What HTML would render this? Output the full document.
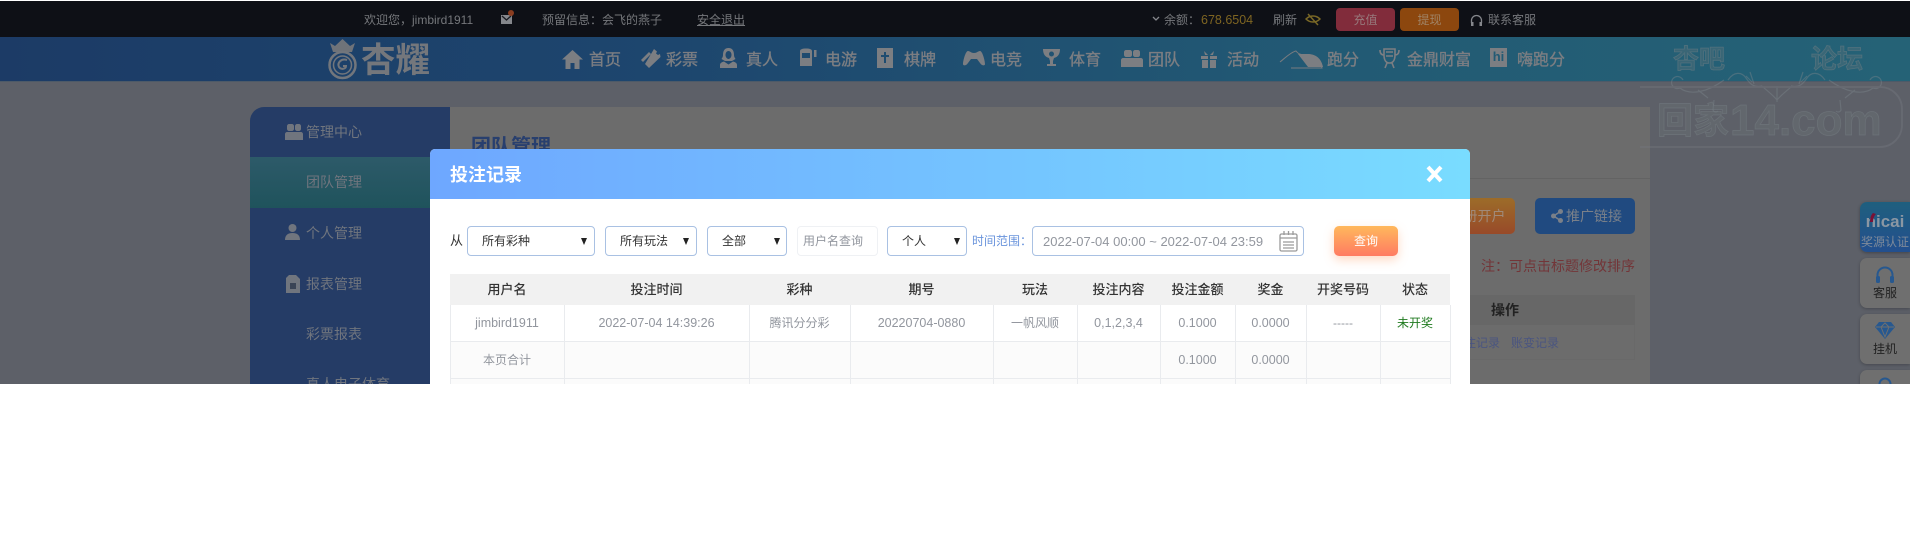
<!DOCTYPE html>
<html lang="zh"><head><meta charset="utf-8"><title>投注记录</title>
<style>
html,body{margin:0;padding:0;background:#fff}
#p{position:relative;width:1910px;height:548px;overflow:hidden;background:#fff;font-family:"Liberation Sans","Noto Sans CJK SC",sans-serif;font-size:12px}
#v{position:absolute;left:0;top:0;width:1910px;height:384px;overflow:hidden;background:#5d6068}
.a{position:absolute;white-space:nowrap}
.c{text-align:center}
.nt{color:#7c7e82;font-size:16px;font-weight:400;-webkit-text-stroke:.35px #7c7e82;top:50px;line-height:22px}
.ni{position:absolute;fill:#7c7e82}
.tb{color:#75777b;font-size:12px;line-height:18px;top:11px}
.side{color:#70757e;font-size:14px;line-height:20px}
.sel{position:absolute;top:226px;height:28px;border:1px solid #a9c1e3;border-radius:4px;background:#fff;color:#333;font-size:12px;line-height:29px}
.sel i{position:absolute;top:11px;width:0;height:0;border-left:3.5px solid transparent;border-right:3.5px solid transparent;border-top:7px solid #222}
.sel span{position:absolute;top:0}
.th{position:absolute;top:274px;height:31px;line-height:31px;text-align:center;font-size:13px;color:#333;font-weight:500}
.td{position:absolute;text-align:center;font-size:12px;color:#92969e;line-height:36px}
.vl{position:absolute;top:305px;height:79px;width:1px;background:#e9ebee}
.hl{position:absolute;left:450px;width:1000px;height:1px;background:#e9ebee}
.rb{position:absolute;left:1860px;width:50px;height:50px;border-radius:7px 0 0 7px;background:#6f6f6f;box-shadow:0 1px 3px rgba(0,0,0,.25);color:#222;text-align:center;font-size:12px}
.wm{color:rgba(110,118,124,.3);-webkit-text-stroke:.8px rgba(122,130,136,.45);font-weight:700}
</style></head><body><div id="p"><div id="v">

<!-- top bar -->
<div class="a" style="left:0;top:0;width:1910px;height:1px;background:#fff"></div>
<div class="a" style="left:0;top:1px;width:1910px;height:36px;background:#0e1016"></div>
<div class="a tb" style="left:364px">欢迎您，jimbird1911</div>
<svg class="a" style="left:500px;top:9px" width="15" height="16" viewBox="0 0 15 16"><rect x="1" y="6" width="11" height="9" fill="#85878c"/><path d="M2 7l4.500 4L11 7" stroke="#1a1c22" stroke-width="1.300" fill="none"/><circle cx="11" cy="4" r="3" fill="#8a3d20"/></svg>
<div class="a tb" style="left:542px">预留信息：会飞的燕子</div>
<div class="a tb" style="left:697px;text-decoration:underline">安全退出</div>
<svg class="a" style="left:1152px;top:16px" width="8" height="6" viewBox="0 0 8 6"><path d="M1 1l3 3 3-3" stroke="#85878c" stroke-width="1.300" fill="none"/></svg>
<div class="a tb" style="left:1164px">余额：</div>
<div class="a tb" style="left:1201px;color:#7e6522;font-size:12.500px">678.6504</div>
<div class="a tb" style="left:1273px">刷新</div>
<svg class="a" style="left:1305px;top:13px" width="16" height="14" viewBox="0 0 16 14"><path d="M1 6c4-4 10-4 14 0c-4 4-10 4-14 0zM3 1l10 11" stroke="#7a6826" stroke-width="1.500" fill="none"/></svg>
<div class="a c" style="left:1336px;top:8px;width:59px;height:23px;line-height:24px;border-radius:4px;background:#812c3b;color:#97797c">充值</div>
<div class="a c" style="left:1400px;top:8px;width:59px;height:23px;line-height:24px;border-radius:4px;background:#8c470e;color:#a08365">提现</div>
<svg class="a" style="left:1470px;top:14px" width="13" height="13" viewBox="0 0 13 13"><path d="M1.500 9V6.500a5 5 0 0 1 10 0V9" stroke="#85878c" stroke-width="1.300" fill="none"/><rect x="1" y="8" width="2.500" height="4" fill="#85878c"/><rect x="9.500" y="8" width="2.500" height="4" fill="#85878c"/></svg>
<div class="a tb" style="left:1488px">联系客服</div>

<!-- nav -->
<div class="a" style="left:0;top:37px;width:1910px;height:45px;background:linear-gradient(90deg,#1c3b66 0%,#1d466e 35%,#225a74 70%,#256276 100%)"></div>
<div class="a" style="left:0;top:81px;width:1910px;height:1px;background:#4d5a68"></div>
<!-- logo -->
<svg class="a" style="left:326px;top:39px" width="33" height="41" viewBox="0 0 33 41"><path d="M7 13L4 4l5 3 7.500-7L24 7l5-3-3 9z" fill="#6f7379"/><circle cx="16.500" cy="26" r="13" fill="none" stroke="#72767c" stroke-width="2.500"/><circle cx="16.500" cy="26" r="9" fill="none" stroke="#72767c" stroke-width="1.500"/><path d="M21 21c-6-2-10 3-8 7 2 3 7 2 7-1h-3" fill="none" stroke="#72767c" stroke-width="2"/></svg>
<div class="a" style="left:361px;top:41px;font-size:34.500px;line-height:40px;font-weight:700;color:#74777c">杏耀</div>
<svg class="ni" style="left:562px;top:49px" width="21" height="20" viewBox="0 0 21 20"><path d="M10.500 1L0 10.500h3.500V20h5v-6h4v6h5v-9.500H21z"/></svg>
<div class="a nt" style="left:589px">首页</div>
<svg class="ni" style="left:640px;top:48px" width="21" height="21" viewBox="0 0 21 21"><path d="M1 12L9 4l2 2-8 8zM5 16L14 1l3 2.500-1 2 2 1.500 2-1 .500 3L9 20z"/></svg>
<div class="a nt" style="left:666px">彩票</div>
<svg class="ni" style="left:719px;top:47px" width="19" height="22" viewBox="0 0 19 22"><path d="M9.500 1C5.500 1 4 4 4 8c0 2-1 3-1.500 4L6 14h7l3.500-2C16 11 15 10 15 8c0-4-1.500-7-5.500-7zm0 3c2 0 3 2 3 4s-1.500 4-3 4-3-2-3-4 1-4 3-4z" fill-rule="evenodd"/><path d="M1 21v-3c0-2 2-3 4-3.500l4.500 3 4.500-3c2 .5 4 1.500 4 3.500v3z"/></svg>
<div class="a nt" style="left:746px">真人</div>
<svg class="ni" style="left:798px;top:48px" width="20" height="20" viewBox="0 0 20 20"><path d="M2 3c0-1.500 2-2.500 6-2.500S14 1.500 14 3v15H2zM4 5v5h8V5z" fill-rule="evenodd"/><rect x="16" y="2" width="2.500" height="7"/></svg>
<div class="a nt" style="left:825px">电游</div>
<svg class="ni" style="left:877px;top:48px" width="16" height="20" viewBox="0 0 16 20"><path d="M0 0h16v20H0zM7 4v3H4v2h3v6h2V9h3V7H9V4z" fill-rule="evenodd"/></svg>
<div class="a nt" style="left:904px">棋牌</div>
<svg class="ni" style="left:963px;top:51px" width="22" height="15" viewBox="0 0 22 15"><path d="M5 0c2 0 3 2 6 2s4-2 6-2c2.500 0 5 10 5 13 0 2-3 2-5-1l-3-4H8l-3 4c-2 3-5 3-5 1C0 10 2.500 0 5 0z"/></svg>
<div class="a nt" style="left:990px">电竞</div>
<svg class="ni" style="left:1042px;top:48px" width="19" height="20" viewBox="0 0 19 20"><path d="M1 1h17c0 5-2 8-6 9l-1 3v3h3v2H5v-2h3v-3L7 10C3 9 1 6 1 1zm8.500 2.500a2.500 2.500 0 1 0 0 5 2.500 2.500 0 0 0 0-5z" fill-rule="evenodd"/></svg>
<div class="a nt" style="left:1069px">体育</div>
<svg class="ni" style="left:1121px;top:49px" width="22" height="19" viewBox="0 0 22 19"><path d="M5 1h4c1 0 2 1 2 2v3c0 1-1 2-2 2H5C4 8 3 7 3 6V3c0-1 1-2 2-2zM14 1h3c1 0 2 1 2 2v3c0 1-1 2-2 2h-3c-1 0-2-1-2-2V3c0-1 1-2 2-2zM0 11c0-1 1-2 2-2h18c1 0 2 1 2 2v7H0z"/></svg>
<div class="a nt" style="left:1148px">团队</div>
<svg class="ni" style="left:1200px;top:50px" width="18" height="18" viewBox="0 0 18 18"><path d="M1 6h7v3H1zM10 6h7v3h-7zM2 10h6v8H2zM10 10h6v8h-6zM4 1l4 4H5zM14 1l-4 4h3z"/></svg>
<div class="a nt" style="left:1227px">活动</div>
<svg class="a" style="left:1279px;top:50px" width="44" height="19" viewBox="0 0 44 19"><path d="M1 12C6 8 12 2 17 1c2 3 5 4 9 4 6 0 14 2 17 13H12" fill="none" stroke="#787b80" stroke-width="1"/><path d="M19 4h10c6 0 13 3 15 13H29z" fill="#7c7e82"/></svg>
<div class="a nt" style="left:1327px">跑分</div>
<svg class="a" style="left:1379px;top:48px" width="21" height="21" viewBox="0 0 21 21"><path d="M1 2c0 4 2 5 4 5V1h11v6c2 0 4-1 4-5M5 7c0 5 2 8 5.500 8S16 12 16 7M8 15l-2 5M13 15l2 5M7 4h7M7 8h7" fill="none" stroke="#7c7e82" stroke-width="1.600"/></svg>
<div class="a nt" style="left:1407px">金鼎财富</div>
<div class="a c" style="left:1490px;top:48px;width:17px;height:19px;background:#7c7e82;color:#225a74;font-size:13px;line-height:18px;font-weight:700">hi</div>
<div class="a nt" style="left:1517px">嗨跑分</div>

<!-- main panel -->
<div class="a" style="left:450px;top:107px;width:1200px;height:277px;background:#6c6c6c"></div>
<div class="a" style="left:450px;top:178px;width:1200px;height:1px;background:#636363"></div>
<div class="a" style="left:471px;top:134px;font-size:20px;line-height:26px;font-weight:700;color:#283f6e">团队管理</div>
<div class="a c" style="left:1440px;top:198px;width:75px;height:36px;border-radius:5px;background:linear-gradient(#9c6c29,#984a29);color:#a08a7a;font-size:14px;line-height:36px">注册开户</div>
<div class="a" style="left:1535px;top:198px;width:100px;height:36px;border-radius:5px;background:#204a80"></div>
<svg class="a" style="left:1551px;top:209px" width="12" height="14" viewBox="0 0 12 14"><circle cx="2.500" cy="7" r="2.500" fill="#7a8089"/><circle cx="9.500" cy="2.500" r="2.500" fill="#7a8089"/><circle cx="9.500" cy="11.500" r="2.500" fill="#7a8089"/><path d="M2.500 7l7-4.500M2.500 7l7 4.500" stroke="#7a8089" stroke-width="1.500"/></svg>
<div class="a" style="left:1566px;top:206px;font-size:14px;line-height:20px;color:#7a8089">推广链接</div>
<div class="a" style="left:1481px;top:256px;font-size:14px;line-height:20px;color:#733538">注：可点击标题修改排序</div>
<div class="a" style="left:1440px;top:295px;width:195px;height:30px;background:#676767"></div>
<div class="a" style="left:1440px;top:325px;width:195px;height:35px;border:1px solid #696969;border-top:0;box-sizing:border-box"></div>
<div class="a" style="left:1491px;top:300px;font-size:14px;line-height:20px;font-weight:700;color:#222">操作</div>
<div class="a" style="left:1452px;top:334px;font-size:12px;line-height:18px;color:#4a5580">投注记录</div>
<div class="a" style="left:1511px;top:334px;font-size:12px;line-height:18px;color:#4a5580">账变记录</div>

<!-- sidebar -->
<div class="a" style="left:250px;top:107px;width:200px;height:277px;border-radius:14px 0 0 0;background:#253c66"></div>
<div class="a" style="left:250px;top:157px;width:200px;height:51px;background:linear-gradient(#2d5a69,#1f535c)"></div>
<svg class="a" style="left:285px;top:124px" width="18" height="16" viewBox="0 0 18 16"><path d="M4 0h3c1 0 2 1 2 2v3c0 1-1 2-2 2H4C3 7 2 6 2 5V2c0-1 1-2 2-2zM12 0h2c1 0 2 1 2 2v3c0 1-1 2-2 2h-2c-1 0-2-1-2-2V2c0-1 1-2 2-2zM0 10c0-1 1-2 2-2h14c1 0 2 1 2 2v6H0z" fill="#70757e"/></svg>
<div class="a side" style="left:306px;top:122px">管理中心</div>
<div class="a side" style="left:306px;top:172px">团队管理</div>
<svg class="a" style="left:285px;top:224px" width="15" height="16" viewBox="0 0 15 16"><circle cx="7.500" cy="4" r="4" fill="#70757e"/><path d="M0 16c0-5 3-7 7.500-7S15 11 15 16z" fill="#70757e"/></svg>
<div class="a side" style="left:306px;top:223px">个人管理</div>
<svg class="a" style="left:286px;top:275px" width="14" height="18" viewBox="0 0 14 18"><path d="M3 0h7l4 4v14H0V3z" fill="#70757e"/><rect x="4" y="8" width="6" height="6" fill="#3a4456"/></svg>
<div class="a side" style="left:306px;top:274px">报表管理</div>
<div class="a side" style="left:306px;top:324px">彩票报表</div>
<div class="a side" style="left:306px;top:374px">真人电子体育</div>

<!-- watermark -->
<div class="a wm" style="left:1673px;top:44px;font-size:26px;line-height:30px">杏吧</div>
<div class="a wm" style="left:1811px;top:44px;font-size:26px;line-height:30px">论坛</div>
<svg class="a" style="left:1640px;top:50px" width="270" height="105" viewBox="0 0 270 105" fill="none" stroke="#7c868c" stroke-width="1.200" opacity=".42"><path d="M88 30c6-9 14-8 18-2s8 10 16 8M185 30c-6-9-14-8-18-2s-8 10-16 8M122 36c4 4 10 8 15 14 5-6 11-10 15-14M110 22l4 12M106 26l6 6M163 22l-4 12M167 26l-6 6M137 36v16M40 38c10 8 28 4 44-8M233 38c-10 8-28 4-44-8M40 38a6 6 0 1 1 3-8M233 38a6 6 0 1 0-3-8M74 50l-1 10a3 3 0 0 0 5 1M200 50l1 10a3 3 0 0 1-5 1M58 40l10 8M215 40l-10 8"/><rect x="-26" y="37" width="288" height="60" rx="22" stroke="#767a80" stroke-width="1.800"/></svg>
<div class="a wm" style="left:1657px;top:98px;font-size:36px;line-height:46px">回家</div>
<div class="a wm" style="left:1730px;top:96px;font-size:44px;line-height:50px;font-family:'Liberation Sans',sans-serif">14.com</div>

<!-- right floating -->
<div class="a" style="left:1860px;top:202px;width:50px;height:50px;border-radius:7px 0 0 7px;background:linear-gradient(#1f5f7e,#234f8e);box-shadow:0 1px 3px rgba(0,0,0,.3)"></div>
<div class="a c" style="left:1860px;top:210px;width:50px;font-size:17px;line-height:24px;font-weight:700;color:#8b97a3">nicai</div>
<svg class="a" style="left:1868px;top:210px" width="12" height="14" viewBox="0 0 12 14"><path d="M2 12c0-4 1-7 3-9l3 1c-2 2-3 5-3 8z" fill="#7a1236"/></svg>
<div class="a c" style="left:1860px;top:234px;width:50px;font-size:12px;line-height:16px;color:#7f8a9a">奖源认证</div>
<div class="rb" style="top:258px"><svg style="display:block;margin:8px auto 0" width="20" height="18" viewBox="0 0 20 18"><path d="M2.500 13V9a7.500 7.500 0 0 1 15 0v4" stroke="#27588f" stroke-width="2" fill="none"/><rect x="1" y="10" width="4" height="7" rx="1.500" fill="#27588f"/><rect x="15" y="10" width="4" height="7" rx="1.500" fill="#27588f"/></svg><div style="line-height:18px">客服</div></div>
<div class="rb" style="top:314px"><svg style="display:block;margin:7px auto 0" width="22" height="19" viewBox="0 0 22 19"><path d="M5 1h12l4 5-10 12L1 6z" fill="#27588f"/><path d="M2 6h18M7 6l4 10 4-10M7 6l4-4 4 4" stroke="#6f6f6f" fill="none"/></svg><div style="line-height:18px">挂机</div></div>
<div class="rb" style="top:370px"><svg style="display:block;margin:7px auto 0" width="14" height="14" viewBox="0 0 14 14"><circle cx="7" cy="7" r="5.500" stroke="#27588f" stroke-width="2" fill="none"/></svg></div>

<!-- modal -->
<div class="a" style="left:430px;top:149px;width:1040px;height:260px;background:#fff;border-radius:5px 5px 0 0"></div>
<div class="a" style="left:430px;top:149px;width:1040px;height:50px;border-radius:5px 5px 0 0;background:linear-gradient(90deg,#6ea7ff 0%,#79dcff 100%)"></div>
<div class="a" style="left:450px;top:162px;font-size:18px;line-height:26px;font-weight:700;color:#fff">投注记录</div>
<svg class="a" style="left:1426px;top:165px" width="17" height="18" viewBox="0 0 17 18"><path d="M2 2l13 14M15 2L2 16" stroke="#fff" stroke-width="4"/></svg>

<div class="a" style="left:450px;top:232px;font-size:13px;line-height:18px;color:#333">从</div>
<div class="sel" style="left:467px;width:126px"><span style="left:14px">所有彩种</span><i style="left:113px"></i></div>
<div class="sel" style="left:605px;width:90px"><span style="left:14px">所有玩法</span><i style="left:77px"></i></div>
<div class="sel" style="left:707px;width:78px"><span style="left:14px">全部</span><i style="left:66px"></i></div>
<div class="sel" style="left:797px;width:79px;border-color:#eff1f4;color:#92969e"><span style="left:5px">用户名查询</span></div>
<div class="sel" style="left:887px;width:78px"><span style="left:14px">个人</span><i style="left:66px"></i></div>
<div class="a" style="left:972px;top:232px;font-size:12px;line-height:18px;color:#6a94dc">时间范围：</div>
<div class="sel" style="left:1032px;width:270px;color:#92969e"><span style="left:10px;font-size:13px">2022-07-04 00:00 ~ 2022-07-04 23:59</span></div>
<svg class="a" style="left:1279px;top:230px" width="19" height="22" viewBox="0 0 19 22" fill="none" stroke="#9a9a9a" stroke-width="1.300"><rect x="1" y="4" width="17" height="17" rx="1.500"/><path d="M1 8h17M4 12h11M4 15h11M4 18h11M5 1v4M9.500 1v4M14 1v4"/></svg>
<div class="a c" style="left:1334px;top:226px;width:64px;height:30px;line-height:31px;border-radius:5px;background:linear-gradient(#ffb85c,#ff7b62);color:#fff;font-size:12px;box-shadow:0 4px 10px rgba(255,150,90,.35)">查询</div>

<!-- table -->
<div class="a" style="left:450px;top:274px;width:1000px;height:31px;background:#f1f1f1"></div>
<div class="a" style="left:450px;top:341px;width:1000px;height:43px;background:#fbfbfb"></div>
<div class="hl" style="top:341px"></div><div class="hl" style="top:378px"></div>
<div class="vl" style="left:450px"></div><div class="vl" style="left:564px"></div><div class="vl" style="left:749px"></div><div class="vl" style="left:850px"></div><div class="vl" style="left:993px"></div><div class="vl" style="left:1077px"></div><div class="vl" style="left:1160px"></div><div class="vl" style="left:1235px"></div><div class="vl" style="left:1306px"></div><div class="vl" style="left:1380px"></div><div class="vl" style="left:1450px"></div>

<div class="th" style="left:450px;width:114px">用户名</div>
<div class="th" style="left:564px;width:185px">投注时间</div>
<div class="th" style="left:749px;width:101px">彩种</div>
<div class="th" style="left:850px;width:143px">期号</div>
<div class="th" style="left:993px;width:84px">玩法</div>
<div class="th" style="left:1077px;width:83px">投注内容</div>
<div class="th" style="left:1160px;width:75px">投注金额</div>
<div class="th" style="left:1235px;width:71px">奖金</div>
<div class="th" style="left:1306px;width:74px">开奖号码</div>
<div class="th" style="left:1380px;width:70px">状态</div>

<div class="td" style="left:450px;top:305px;width:114px;font-size:12.500px">jimbird1911</div>
<div class="td" style="left:564px;top:305px;width:185px;font-size:12.500px">2022-07-04 14:39:26</div>
<div class="td" style="left:749px;top:305px;width:101px">腾讯分分彩</div>
<div class="td" style="left:850px;top:305px;width:143px;font-size:12.500px">20220704-0880</div>
<div class="td" style="left:993px;top:305px;width:84px">一帆风顺</div>
<div class="td" style="left:1077px;top:305px;width:83px;font-size:12.500px">0,1,2,3,4</div>
<div class="td" style="left:1160px;top:305px;width:75px;font-size:12.500px">0.1000</div>
<div class="td" style="left:1235px;top:305px;width:71px;font-size:12.500px">0.0000</div>
<div class="td" style="left:1306px;top:305px;width:74px">-----</div>
<div class="td" style="left:1380px;top:305px;width:70px;color:#1f7a1f">未开奖</div>

<div class="td" style="left:450px;top:342px;width:114px">本页合计</div>
<div class="td" style="left:1160px;top:342px;width:75px;font-size:12.500px">0.1000</div>
<div class="td" style="left:1235px;top:342px;width:71px;font-size:12.500px">0.0000</div>

</div></div></body></html>
